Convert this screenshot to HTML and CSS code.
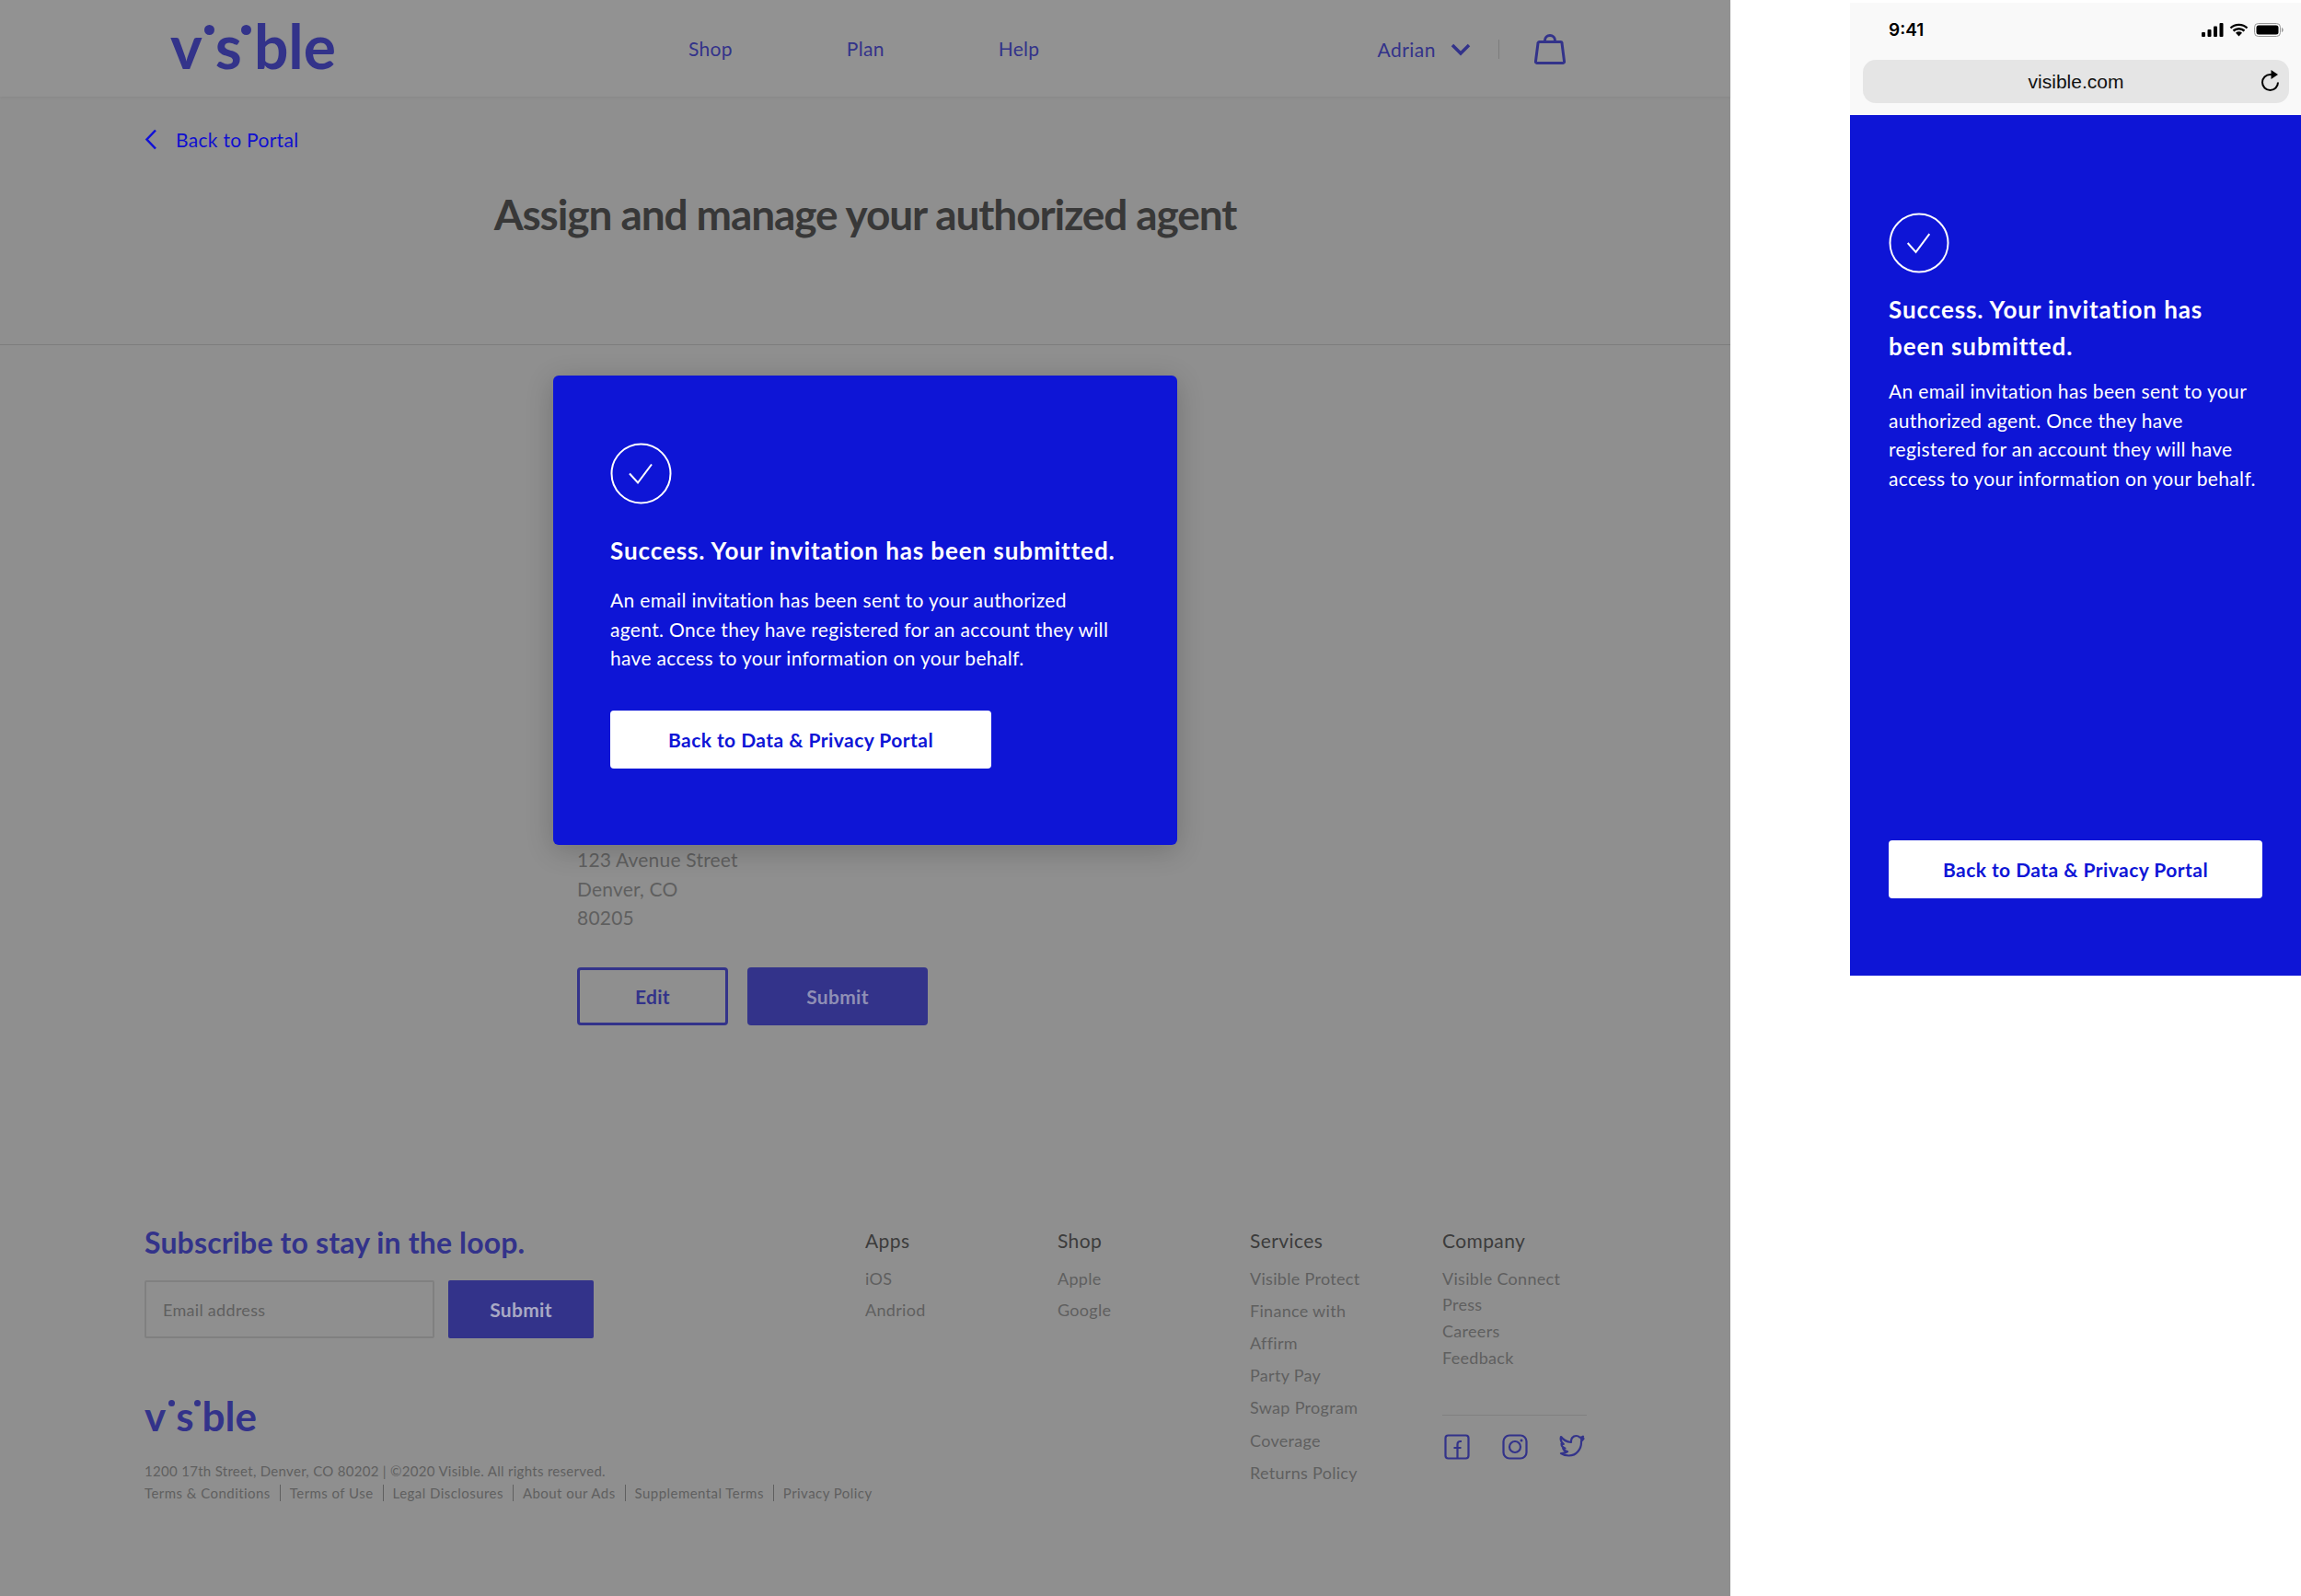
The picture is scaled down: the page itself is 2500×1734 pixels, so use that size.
FILE: index.html

```html
<!DOCTYPE html>
<html lang="en">
<head>
  <meta charset="UTF-8">
  <title>Visible - Assign and manage your authorized agent</title>
  <link rel="stylesheet" href="styles.css">
</head>
<body>
  <div class="desktop">
    <header class="site-header">
      <a class="logo">
        <span class="logo-v">v</span><span class="logo-s">s</span><span class="logo-ble">ble</span>
      </a>
      <nav class="main-nav">
        <a>Shop</a>
        <a>Plan</a>
        <a>Help</a>
      </nav>
      <div class="account">
        <span class="account-name">Adrian</span>
        <svg class="chevron-down" width="22" height="14" viewBox="0 0 22 14"><path d="M2 2l9 9 9-9" fill="none" stroke="#33338a" stroke-width="3.5"/></svg>
        <span class="account-sep"></span>
        <svg class="bag" width="34" height="33" viewBox="0 0 34 33"><path d="M5.500 8.500h23a1.500 1.500 0 0 1 1.500 1.500l2.500 19.500a1.500 1.500 0 0 1-1.500 2H3a1.500 1.500 0 0 1-1.500-2L4 10a1.500 1.500 0 0 1 1.500-1.500zM11.500 8.500V7a5.500 5.500 0 0 1 11 0v1.500" fill="none" stroke="#33338a" stroke-width="3"/></svg>
      </div>
    </header>

    <a class="back-link">
      <svg width="14" height="23" viewBox="0 0 14 23"><path d="M12 1.500L2.500 11.500l9.500 10" fill="none" stroke="#1010d8" stroke-width="2.500"/></svg>
      <span>Back to Portal</span>
    </a>

    <h1 class="page-title">Assign and manage your authorized agent</h1>

    <section class="form-area">
      <p>123 Avenue Street</p>
      <p>Denver, CO</p>
      <p>80205</p>
      <div class="form-buttons">
        <button class="btn-edit">Edit</button>
        <button class="btn-submit">Submit</button>
      </div>
    </section>

    <footer class="site-footer">
      <div class="footer-left">
        <h2>Subscribe to stay in the loop.</h2>
        <div class="subscribe-row">
          <div class="email-input">Email address</div>
          <button class="subscribe-btn">Submit</button>
        </div>
        <a class="logo logo-small">
          <span class="logo-v">v</span><span class="logo-s">s</span><span class="logo-ble">ble</span>
        </a>
        <p class="legal">1200 17th Street, Denver, CO 80202 | ©2020 Visible. All rights reserved.</p>
        <p class="legal-links">
          <a>Terms &amp; Conditions</a><a>Terms of Use</a><a>Legal Disclosures</a><a>About our Ads</a><a>Supplemental Terms</a><a>Privacy Policy</a>
        </p>
      </div>
      <div class="footer-col">
        <h3>Apps</h3>
        <ul class="links-short">
          <li>iOS</li>
          <li>Andriod</li>
        </ul>
      </div>
      <div class="footer-col">
        <h3>Shop</h3>
        <ul class="links-short">
          <li>Apple</li>
          <li>Google</li>
        </ul>
      </div>
      <div class="footer-col">
        <h3>Services</h3>
        <ul class="links-wide">
          <li>Visible Protect</li>
          <li>Finance with</li>
          <li>Affirm</li>
          <li>Party Pay</li>
          <li>Swap Program</li>
          <li>Coverage</li>
          <li>Returns Policy</li>
        </ul>
      </div>
      <div class="footer-col">
        <h3>Company</h3>
        <ul class="links-tight">
          <li>Visible Connect</li>
          <li>Press</li>
          <li>Careers</li>
          <li>Feedback</li>
        </ul>
        <div class="social">
          <svg width="28" height="28" viewBox="0 0 28 28"><rect x="1.500" y="1.500" width="25" height="25" rx="3" fill="none" stroke="#33338a" stroke-width="2.200"/><path d="M19 8h-1.500a3 3 0 0 0-3 3v15.500M10.500 15H18.500" fill="none" stroke="#33338a" stroke-width="2.200"/></svg>
          <svg width="28" height="28" viewBox="0 0 28 28"><rect x="1.500" y="1.500" width="25" height="25" rx="6.500" fill="none" stroke="#33338a" stroke-width="2.200"/><circle cx="14" cy="14" r="6" fill="none" stroke="#33338a" stroke-width="2.200"/><circle cx="21" cy="7" r="1.500" fill="#33338a"/></svg>
          <svg width="28" height="26" viewBox="0 0 28 26"><path d="M2 3c2.500 3.500 6 5.500 11 6-.5-4 2-7 5.500-7 1.800 0 3 .7 4 1.700 1 0 2.500-.4 3.500-1-.3 1.300-1 2.200-2 3 1-.2 1.800-.3 2.500-.7-.6 1.200-1.500 2-2.500 2.800C24.500 16 19 23.500 10.500 23.500c-3 0-6-.8-8.500-2.500 2.500.2 5-.5 7-2-2.500-.2-4-1.400-4.800-3.500h2.300C4 14.800 2.500 12.800 2.500 10.500c.8.300 1.500.5 2.300.5C2.500 9.300 1.200 6 2 3z" fill="none" stroke="#33338a" stroke-width="2.200" stroke-linejoin="round"/></svg>
        </div>
      </div>
    </footer>

    <div class="modal">
      <svg class="check-badge" width="67" height="67" viewBox="0 0 67 67"><circle cx="33.500" cy="33.500" r="32" fill="none" stroke="#fff" stroke-width="2"/><path d="M21 33.500l9 10 15-20" fill="none" stroke="#fff" stroke-width="2"/></svg>
      <h2>Success. Your invitation has been submitted.</h2>
      <p>An email invitation has been sent to your authorized agent. Once they have registered for an account they will have access to your information on your behalf.</p>
      <button class="btn-white">Back to Data &amp; Privacy Portal</button>
    </div>
  </div>

  <div class="phone">
    <div class="browser-chrome">
      <div class="status-bar">
        <span class="clock">9:41</span>
        <div class="status-icons">
          <svg width="24" height="15" viewBox="0 0 24 15"><rect x="0" y="10" width="4" height="5" rx="1"/><rect x="6.500" y="7" width="4" height="8" rx="1"/><rect x="13" y="3.500" width="4" height="11.500" rx="1"/><rect x="19.500" y="0" width="4" height="15" rx="1"/></svg>
          <svg width="21" height="15" viewBox="0 0 21 15"><path d="M1.500 5.500a13 13 0 0 1 18 0M4.500 8.500a9 9 0 0 1 12 0" fill="none" stroke="#000" stroke-width="2.400"/><path d="M7 10.800a5 5 0 0 1 7 0L10.500 14.500z"/></svg>
          <svg width="32" height="15" viewBox="0 0 32 15"><rect x=".5" y=".5" width="28" height="14" rx="4" fill="none" stroke="#999"/><rect x="2.500" y="2.500" width="24" height="10" rx="2.500"/><path d="M30 5v5c1-.3 1.700-1.300 1.700-2.500S31 5.300 30 5z" fill="#999"/></svg>
        </div>
      </div>
      <div class="url-bar">
        <span>visible.com</span>
        <svg class="reload" width="22" height="24" viewBox="0 0 22 24"><path d="M19 13.500a8.500 8.500 0 1 1-8.500-8.500h2" fill="none" stroke="#000" stroke-width="2"/><path d="M11.500 0l7.500 5-7.500 5z"/></svg>
      </div>
    </div>
    <div class="phone-body">
      <svg class="check-badge" width="66" height="66" viewBox="0 0 67 67"><circle cx="33.500" cy="33.500" r="32" fill="none" stroke="#fff" stroke-width="2"/><path d="M21 33.500l9 10 15-20" fill="none" stroke="#fff" stroke-width="2"/></svg>
      <h2>Success. Your invitation has been submitted.</h2>
      <p>An email invitation has been sent to your authorized agent. Once they have registered for an account they will have access to your information on your behalf.</p>
      <button class="btn-white">Back to Data &amp; Privacy Portal</button>
    </div>
  </div>
</body>
</html>
```

FILE: styles.css

```css
* {
  box-sizing: border-box;
}
html, body {
  margin: 0;
  height: 1734px;
  overflow: hidden;
}
body {
  display: flex;
  background-color: #fff;
  font-family: 'Lato', 'Liberation Sans', sans-serif;
}
h1, h2, h3, p, ul {
  margin: 0;
  padding: 0;
}
ul {
  list-style: none;
}
button {
  font-family: inherit;
  border: none;
  letter-spacing: 0.3px;
}

/* left side, dimmed desktop page */
.desktop {
  position: relative;
  width: 1880px;
  height: 1734px;
  flex: none;
  background-color: #8f8f8f;
}
.site-header {
  display: flex;
  align-items: center;
  height: 105px;
  padding: 0 179px 0 185px;
  background-color: #929292;
  box-shadow: 0 1px 3px rgba(0,0,0,0.06);
}
.logo {
  display: flex;
  flex: none;
  width: 178px;
  color: #33338a;
  font-family: 'Lato', sans-serif;
  font-weight: 700;
  font-size: 66px;
  line-height: 1;
}
.site-header .logo {
  margin-bottom: 6px;
}
.logo-v, .logo-s {
  position: relative;
}
.logo-v {
  margin-right: 14px;
}
.logo-s {
  margin-right: 13px;
}
.logo-v::after, .logo-s::after {
  content: "";
  position: absolute;
  top: 10px;
  right: -13px;
  width: 11px;
  height: 11px;
  border-radius: 50%;
  background-color: #33338a;
}
.logo-s::after {
  right: -10px;
}
.logo-small {
  font-size: 44px;
  margin-top: 62px;
}
.logo-small .logo-v {
  margin-right: 11px;
}
.logo-small .logo-s {
  margin-right: 9px;
}
.logo-small .logo-v::after, .logo-small .logo-s::after {
  top: 5px;
  right: -10px;
  width: 7px;
  height: 7px;
}
.logo-small .logo-s::after {
  right: -7px;
}
.main-nav {
  display: flex;
  gap: 124px;
  margin-left: 385px;
  font-size: 21px;
  letter-spacing: 0.3px;
  color: #33338a;
}
.account {
  display: flex;
  align-items: center;
  margin-left: auto;
  padding-top: 2px;
  color: #33338a;
  font-size: 21px;
  letter-spacing: 0.5px;
}
.chevron-down {
  margin-left: 16px;
}
.account-sep {
  width: 1px;
  height: 21px;
  margin: 0 38px 0 30px;
  background-color: #7d7d7d;
}
.back-link {
  display: flex;
  align-items: center;
  gap: 20px;
  margin: 34px 0 0 157px;
  color: #1010d0;
  font-size: 21px;
  letter-spacing: 0.3px;
}
.page-title {
  margin-top: 41px;
  text-align: center;
  font-size: 46px;
  letter-spacing: -1.1px;
  font-weight: 700;
  color: #383838;
  height: 170px;
  border-bottom: 1px solid #7d7d7d;
}

/* form hidden behind the modal */
.form-area {
  padding: 543px 0 0 627px;
  color: #5f5f5f;
  font-size: 21px;
  letter-spacing: 0.2px;
  line-height: 31.500px;
}
.form-buttons {
  display: flex;
  gap: 21px;
  margin-top: 38px;
}
.form-buttons button {
  height: 63px;
  border-radius: 4px;
  font-size: 21px;
  font-weight: 700;
}
.btn-edit {
  width: 164px;
  background: none;
  border: 3px solid #33338a;
  color: #33338a;
}
.btn-submit {
  width: 196px;
  background-color: #33338a;
  color: #8f8fb5;
}

.site-footer {
  display: flex;
  align-items: flex-start;
  margin-top: 216px;
  padding-left: 157px;
}
.footer-left {
  width: 783px;
}
.footer-left h2 {
  font-size: 32px;
  font-weight: 700;
  letter-spacing: 0.15px;
  line-height: 40px;
  color: #33338a;
}
.subscribe-row {
  display: flex;
  gap: 15px;
  margin-top: 21px;
}
.email-input {
  display: flex;
  align-items: center;
  width: 315px;
  height: 63px;
  padding: 2px 0 0 18px;
  border: 2px solid #808080;
  border-radius: 2px;
  font-size: 18px;
  letter-spacing: 0.3px;
  color: #5f5f5f;
}
.subscribe-btn {
  width: 158px;
  height: 63px;
  border-radius: 2px;
  background-color: #33338a;
  color: #a9a9c4;
  font-size: 21px;
  font-weight: 700;
}
.legal, .legal-links {
  font-size: 15px;
  color: #5f5f5f;
}
.legal {
  margin-top: 29px;
  letter-spacing: 0.3px;
}
.legal-links {
  margin-top: 6px;
  letter-spacing: 0.45px;
  white-space: nowrap;
}
.legal-links a + a {
  margin-left: 10px;
  padding-left: 10px;
  border-left: 1px solid #5f5f5f;
}
.footer-col {
  width: 209px;
  padding-top: 5px;
}
.footer-col h3 {
  font-size: 21px;
  font-weight: 400;
  letter-spacing: 0.4px;
  line-height: 26px;
  color: #3c3c3c;
  margin-bottom: 11px;
}
.footer-col li {
  font-size: 18px;
  letter-spacing: 0.3px;
  color: #5f5f5f;
}
.links-short li {
  line-height: 34px;
}
.links-wide li {
  line-height: 35.200px;
}
.links-tight {
  padding-top: 3px;
}
.links-tight li {
  line-height: 28.700px;
}
.social {
  display: flex;
  justify-content: space-between;
  width: 157px;
  margin-top: 48px;
  padding: 20px 2px 0 2px;
  border-top: 1px solid #808080;
}

/* success modal over the page */
.modal {
  position: absolute;
  left: 601px;
  top: 408px;
  width: 678px;
  height: 510px;
  padding: 73px 40px 0 62px;
  border-radius: 6px;
  background-color: #0e15d6;
  color: #fff;
  box-shadow: 0 6px 30px rgba(0,0,0,0.2);
}
.check-badge {
  display: block;
}
.modal h2, .phone-body h2 {
  font-size: 26px;
  letter-spacing: 0.9px;
  font-weight: 700;
}
.modal p, .phone-body p {
  font-size: 21px;
  letter-spacing: 0.33px;
  line-height: 31.500px;
}
.modal h2 {
  margin-top: 34px;
  line-height: 32px;
  white-space: nowrap;
}
.modal p {
  max-width: 552px;
  margin-top: 22px;
}
.btn-white {
  display: block;
  background-color: #fff;
  color: #0e15d6;
  height: 63px;
  border-radius: 4px;
  font-size: 21px;
  letter-spacing: 0.45px;
  font-weight: 700;
}
.modal .btn-white {
  width: 414px;
  margin-top: 41px;
}

/* right side, phone view */
.phone {
  width: 490px;
  height: 1060px;
  margin-left: 130px;
  flex: none;
  display: flex;
  flex-direction: column;
}
.browser-chrome {
  height: 122px;
  margin-top: 3px;
  padding: 0 13px 0 14px;
  background-color: #f9f9f9;
  flex: none;
}
.status-bar {
  display: flex;
  justify-content: space-between;
  align-items: center;
  height: 59px;
  margin-bottom: 3px;
  padding: 0 6px 0 28px;
}
.clock {
  font-family: 'Inter', sans-serif;
  font-size: 19px;
  font-weight: 600;
  color: #000;
}
.status-icons {
  display: flex;
  align-items: center;
  gap: 6px;
}
.url-bar {
  position: relative;
  height: 47px;
  border-radius: 14px;
  background-color: #e5e5e5;
  text-align: center;
  line-height: 47px;
  font-family: 'Liberation Sans', sans-serif;
  font-size: 21px;
  color: #111;
}
.reload {
  position: absolute;
  right: 9px;
  top: 11px;
}
.phone-body {
  flex: 1;
  padding: 106px 42px 0;
  background-color: #0e15d6;
  color: #fff;
}
.phone-body h2 {
  margin-top: 19px;
  line-height: 40px;
}
.phone-body p {
  margin-top: 13px;
}
.phone-body .btn-white {
  width: 406px;
  margin-top: 378px;
}
```
